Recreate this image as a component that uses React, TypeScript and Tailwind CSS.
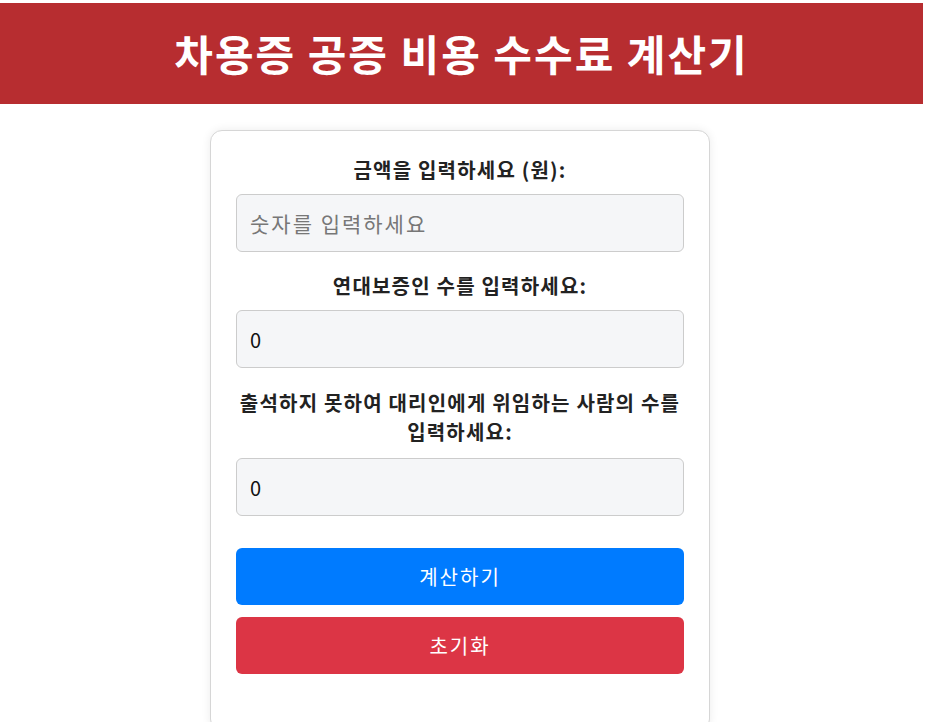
import { useState } from 'react';

const FONT = "font-['Noto_Sans_CJK_KR','Noto_Sans',sans-serif]";

export default function App() {
  const [amount, setAmount] = useState('');
  const [guarantors, setGuarantors] = useState('0');
  const [proxies, setProxies] = useState('0');

  const reset = () => {
    setAmount('');
    setGuarantors('0');
    setProxies('0');
  };

  return (
    <div className={`min-h-screen bg-white pt-[3px] ${FONT}`}>
      <header className="mr-[3px] flex h-[101px] items-center justify-center bg-[#b72d30]">
        <h1 className="-mt-[2px] text-[42px] font-bold leading-none tracking-[2px] text-white">
          차용증 공증 비용 수수료 계산기
        </h1>
      </header>

      <div className="pr-[6px]">
        <div className="mx-auto mt-[26px] w-[500px] rounded-xl border border-[#d6d6d6] bg-white px-[25px] pb-14 pt-[24px] shadow-[0_0_10px_rgba(0,0,0,0.08)]">
          <label className="block text-center text-[20px] font-bold leading-[29px] tracking-[1.2px] text-[#222]">
            금액을 입력하세요 (원):
          </label>
          <input
            type="text"
            value={amount}
            onChange={e => setAmount(e.target.value)}
            placeholder="숫자를 입력하세요"
            className="mt-[10px] block h-[58px] w-full rounded-md border border-[#cccccc] bg-[#f5f6f8] px-[13px] text-[21px] tracking-[2px] text-[#111] outline-none placeholder:text-[#777]"
          />

          <label className="mt-[19px] block text-center text-[20px] font-bold leading-[29px] tracking-[1.2px] text-[#222]">
            연대보증인 수를 입력하세요:
          </label>
          <input
            type="text"
            value={guarantors}
            onChange={e => setGuarantors(e.target.value)}
            className="mt-[10px] block h-[58px] w-full rounded-md border border-[#cccccc] bg-[#f5f6f8] px-[13px] text-[20px] text-[#111] outline-none"
          />

          <label className="mt-[20px] block text-center text-[20px] font-bold leading-[29px] tracking-[1.2px] text-[#222]">
            출석하지 못하여 대리인에게 위임하는 사람의 수를 입력하세요:
          </label>
          <input
            type="text"
            value={proxies}
            onChange={e => setProxies(e.target.value)}
            className="mt-[12px] block h-[58px] w-full rounded-md border border-[#cccccc] bg-[#f5f6f8] px-[13px] text-[20px] text-[#111] outline-none"
          />

          <button className="mt-[32px] flex h-[57px] w-full items-center justify-center rounded-md bg-[#007bff] text-[20px] tracking-[2px] text-white">
            계산하기
          </button>
          <button
            onClick={reset}
            className="mt-[12px] flex h-[57px] w-full items-center justify-center rounded-md bg-[#dc3545] text-[20px] tracking-[2px] text-white"
          >
            초기화
          </button>
        </div>
      </div>
    </div>
  );
}
